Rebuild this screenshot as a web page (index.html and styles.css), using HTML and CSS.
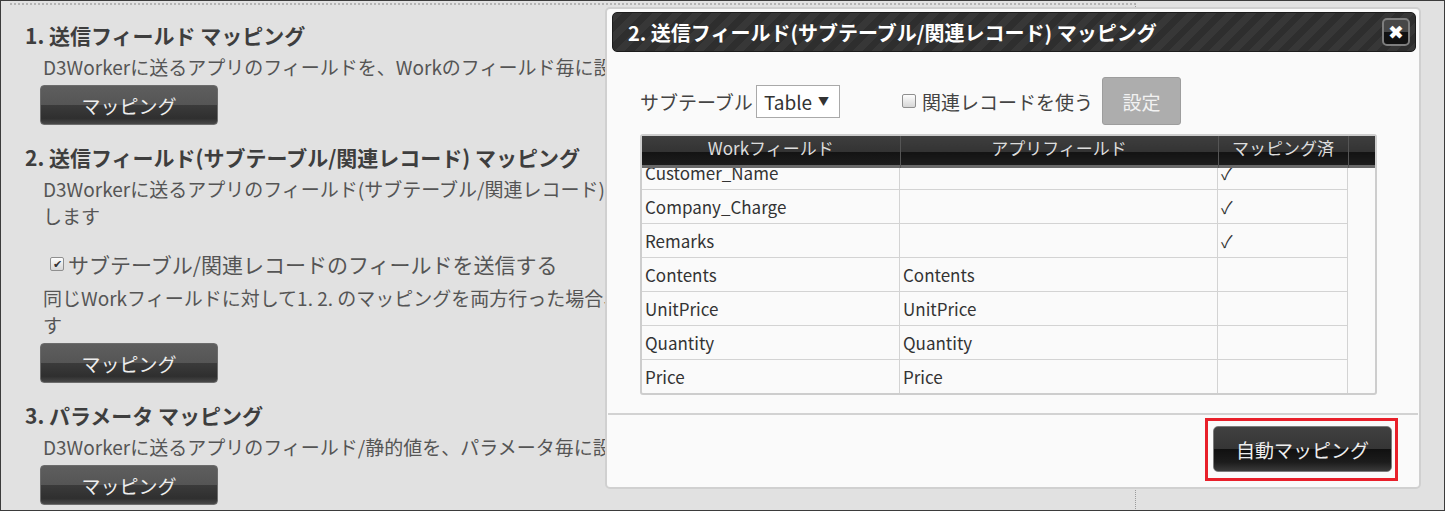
FILE: index.html
```html
<!DOCTYPE html>
<html lang="ja">
<head>
    <meta charset="UTF-8">
    <meta name="viewport" content="width=device-width, initial-scale=1.0">
    <title>D3Worker 連携設定</title>
    <link rel="stylesheet" href="styles.css">
</head>
<body>
<div class="screen">
    <div class="settings">
        <section class="block">
            <h2>1. 送信フィールド マッピング</h2>
            <p class="desc">D3Workerに送るアプリのフィールドを、Workのフィールド毎に設定します</p>
            <button class="btn-map">マッピング</button>
        </section>

        <section class="block">
            <h2>2. 送信フィールド(サブテーブル/関連レコード) マッピング</h2>
            <p class="desc">D3Workerに送るアプリのフィールド(サブテーブル/関連レコード)を、Workのフィールド毎に設定<br>します</p>
            <label class="send-sub"><input type="checkbox" class="check" checked>サブテーブル/関連レコードのフィールドを送信する</label>
            <p class="desc">同じWorkフィールドに対して1. 2. のマッピングを両方行った場合、2. のマッピングが優先されま<br>す</p>
            <button class="btn-map">マッピング</button>
        </section>

        <section class="block">
            <h2>3. パラメータ マッピング</h2>
            <p class="desc">D3Workerに送るアプリのフィールド/静的値を、パラメータ毎に設定します</p>
            <button class="btn-map">マッピング</button>
        </section>
    </div>

    <!-- subtable mapping dialog -->
    <div class="modal">
        <div class="modal-header">
            <span>2. 送信フィールド(サブテーブル/関連レコード) マッピング</span>
            <button class="close">✖</button>
        </div>

        <div class="modal-body">
            <div class="controls">
                <span>サブテーブル</span>
                <span class="select-box">Table <span class="caret">▼</span></span>
                <label class="use-related"><input type="checkbox" class="check">関連レコードを使う</label>
                <button class="btn-setting">設定</button>
            </div>

            <div class="table-box">
                <table class="map-head">
                    <colgroup><col style="width:258px"><col style="width:318px"><col style="width:130px"><col></colgroup>
                    <tr><th>Workフィールド</th><th>アプリフィールド</th><th>マッピング済</th><th></th></tr>
                </table>
                <div class="table-scroll">
                    <table class="map-body">
                        <colgroup><col style="width:258px"><col style="width:318px"><col style="width:130px"></colgroup>
                        <tr><td>Customer_Name</td><td></td><td>✓</td></tr>
                        <tr><td>Company_Charge</td><td></td><td>✓</td></tr>
                        <tr><td>Remarks</td><td></td><td>✓</td></tr>
                        <tr><td>Contents</td><td>Contents</td><td></td></tr>
                        <tr><td>UnitPrice</td><td>UnitPrice</td><td></td></tr>
                        <tr><td>Quantity</td><td>Quantity</td><td></td></tr>
                        <tr><td>Price</td><td>Price</td><td></td></tr>
                    </table>
                </div>
            </div>
        </div>

        <div class="modal-footer">
            <span class="highlight"><button class="btn-auto">自動マッピング</button></span>
        </div>
    </div>
</div>
</body>
</html>
```

FILE: styles.css
```css
* { box-sizing: border-box; }
body { margin: 0; font-family: "Noto Sans CJK JP", "Noto Sans", sans-serif; }
button { font-family: inherit; cursor: pointer; }

.screen { position: relative; width: 1445px; height: 511px; border: 1px solid #3b3b3b; background: #e1e1e1; overflow: hidden; }

/* left settings column */
.settings { margin: 2px 0 0 9px; width: 1126px; height: 520px; padding: 17px 0 0 15px; border-top: 2px dotted #b4b4b4; border-right: 1px dotted #9a9a9a; }
.block { margin-bottom: 19px; }
.block h2 { margin: 0 0 5px; font-size: 21px; line-height: 26px; font-weight: bold; color: #3e3e3e; white-space: nowrap; }
.desc { margin: 0 0 5px 18px; font-size: 19px; line-height: 27px; color: #555; white-space: nowrap; }
.send-sub { display: flex; align-items: center; gap: 4px; margin: 20px 0 5px 25px; font-size: 21px; line-height: 30px; color: #555; }

.btn-map { display: block; margin-left: 15px; width: 178px; height: 40px; border: 1px solid #6c6c6c; border-radius: 4px; color: #eee; font-size: 19px; background: linear-gradient(#5e5e5e, #555 50%, #3b3b3b 50%, #2f2f2f 85%, #474747); }

/* checkbox */
.check { appearance: none; display: inline-grid; place-content: center; width: 14px; height: 14px; margin: 0; border: 1px solid #8f8f8f; border-radius: 2px; background: linear-gradient(#fdfdfd, #d6d6d6); }
.check:checked::after { content: "✔"; font-size: 11px; line-height: 1; color: #333; }

/* dialog */
.modal { position: absolute; left: 604px; top: 6px; width: 816px; background: #fafafa; border: 2px solid #d0d0d0; border-radius: 5px; }
.modal-header { display: flex; align-items: center; justify-content: space-between; height: 40px; margin: 3px 3px 0 5px; padding: 0 5px 0 15px; border: 1px solid #1c1c1c; border-radius: 5px; color: #fff; font-size: 20px; font-weight: bold; background: repeating-linear-gradient(135deg, #373737 0 7px, #2e2e2e 7px 14px); }
.close { display: grid; place-items: center; width: 28px; height: 28px; padding: 0; border: 2px solid #7e7e7e; border-radius: 5px; color: #fff; font-size: 19px; line-height: 1; font-family: "DejaVu Sans", sans-serif; background: linear-gradient(#474747 50%, #121212 50%); }

.modal-body { padding: 25px 0 18px 33px; }
.controls { display: flex; align-items: center; height: 48px; font-size: 19px; color: #444; }
.select-box { display: inline-flex; align-items: center; margin-left: 3px; width: 84px; height: 33px; padding: 0 7px; border: 1px solid #a9a9a9; background: #fff; color: #333; }
.caret { margin-left: 6px; font-size: 11px; }
.use-related { display: flex; align-items: center; gap: 6px; margin-left: 62px; }
.btn-setting { margin-left: 9px; width: 79px; height: 48px; border: 1px solid #9d9d9d; border-radius: 3px; background: #adadad; color: #f2f2f2; font-size: 19px; }

/* mapping table */
.table-box { margin-top: 9px; width: 737px; border: 2px solid #cdcdcd; border-radius: 3px; background: #fafafa; }
.map-head { width: 733px; table-layout: fixed; border-collapse: collapse; }
.map-head th { height: 32px; padding: 0 0 8px; font-size: 17px; line-height: 24px; font-weight: normal; color: #ddd; vertical-align: top; background: linear-gradient(#3e3e3e, #333 50%, #131313 50%, #1d1d1d 92%, #6a6a6a 92%); }
.map-head th + th { border-left: 1px solid #555; }
.table-scroll { height: 225px; overflow: hidden; }
.map-body { width: 706px; margin-top: -12px; table-layout: fixed; border-spacing: 0; }
.map-body td { padding: 0 3px; line-height: 33px; font-size: 17px; color: #333; white-space: nowrap; overflow: hidden; border-right: 1px solid #d3d3d3; border-bottom: 1px solid #d3d3d3; }

.modal-footer { display: flex; justify-content: flex-end; margin: 0 1px; padding: 3px 20px 6px 0; border-top: 2px solid #d2d2d2; }
.highlight { display: block; padding: 5px 3px 6px 5px; border: 3px solid #e8202a; }
.btn-auto { display: block; width: 179px; height: 46px; border: 1px solid #7c7c7c; border-radius: 5px; color: #eee; font-size: 19px; background: linear-gradient(#404040, #353535 50%, #101010 50%, #1c1c1c 80%, #3a3a3a); }
```
